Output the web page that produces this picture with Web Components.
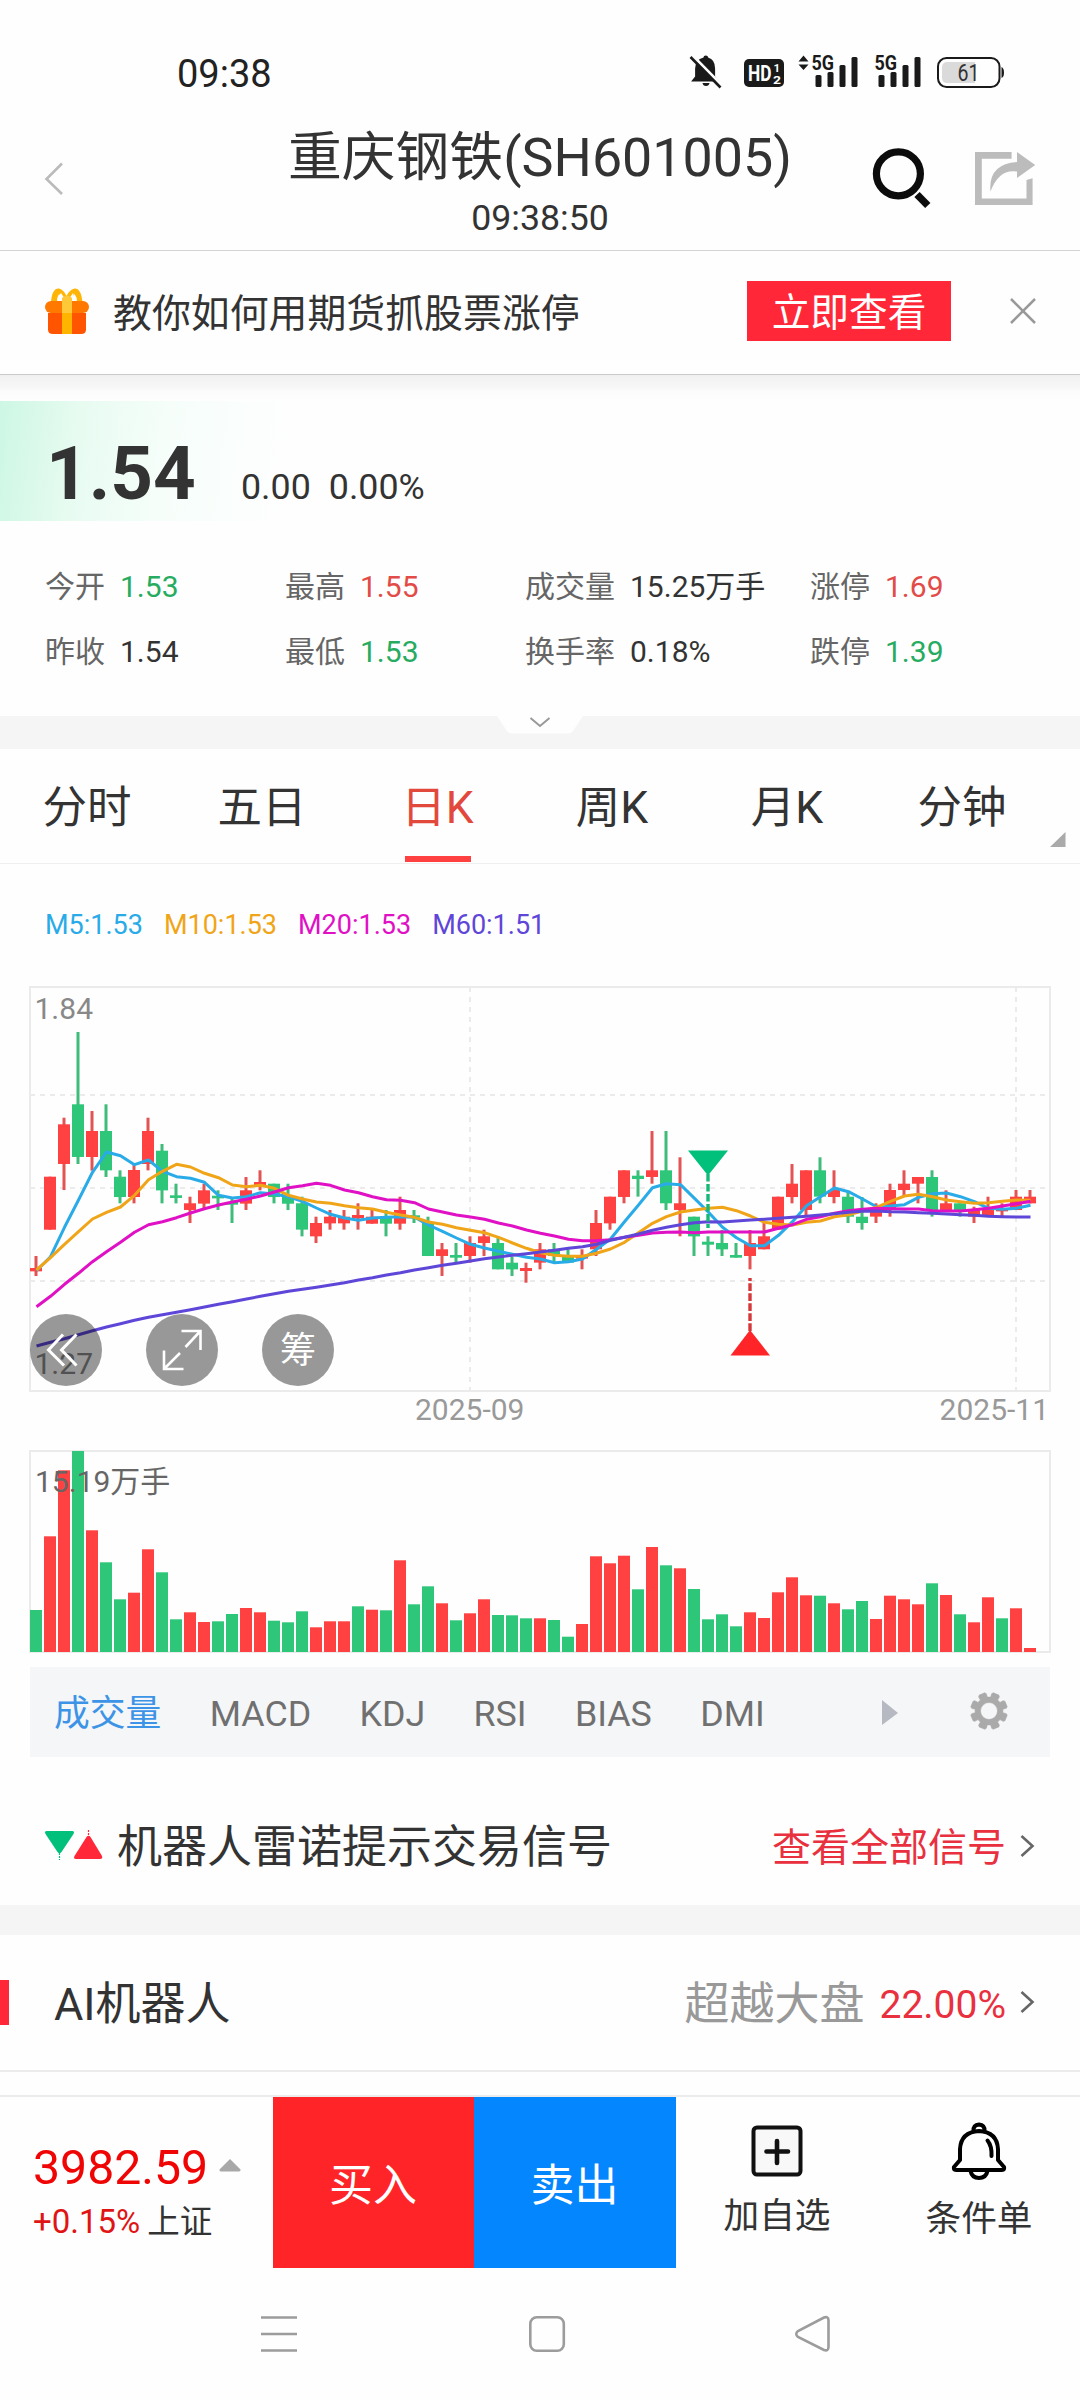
<!DOCTYPE html>
<html lang="zh-CN">
<head>
<meta charset="utf-8">
<title>重庆钢铁(SH601005)</title>
<style>
html,body{margin:0;padding:0;background:#fefefe}
body{width:1080px;height:2400px;overflow:hidden;font-family:Roboto,"Noto Sans CJK SC",sans-serif;color:#333}
</style>
</head>
<body>
<stock-page></stock-page>
<script>
const define=(name,css,html,init)=>{
  const t=document.createElement('template');
  t.innerHTML=`<style>:host{display:block;box-sizing:border-box}*{box-sizing:border-box}svg{display:block}${css}</style>${html}`;
  customElements.define(name,class extends HTMLElement{
    constructor(){super();this.attachShadow({mode:'open'}).appendChild(t.content.cloneNode(true));}
    connectedCallback(){if(init&&!this.ready){this.ready=true;init.call(this,this.shadowRoot);}}
  });
};

/* System status bar */
define('status-bar',`
:host{height:110px;display:flex;justify-content:space-between;padding:52px 74px 0 177px}
.clock{font-size:38px;line-height:44px;color:#222}
svg{margin-top:-2px}
`,`<span class="clock">09:38</span>
<svg width="320" height="44" viewBox="686 50 320 44" fill="#1a1a1a" font-family="Roboto,sans-serif">
<path d="M703.5 57.5q0-2 2.3-2t2.3 2q7 2 7 11v8l4 5h-28l4-5v-8q0-9 8.400-11z"/><path d="M702.500 83h7q-.5 3-3.500 3t-3.500-3z"/>
<path d="M692.500 55.500L723 86.500" stroke="#fefefe" stroke-width="3"/><path d="M690.500 57L720.500 87.500" stroke="#1a1a1a" stroke-width="2.600"/>
<rect x="744" y="59" width="40" height="28" rx="5"/>
<g fill="#fff" font-weight="700"><text x="748" y="81" font-size="22" textLength="23.500" lengthAdjust="spacingAndGlyphs">HD</text><text x="773.500" y="71.500" font-size="11.500">1</text><text x="773" y="84" font-size="11.500" textLength="8" lengthAdjust="spacingAndGlyphs">2</text></g>
<path d="M803.500 55.500l5 6h-10zM803.500 70l5-5.500h-10z"/>
<text x="811.500" y="70" font-size="20" font-weight="700" textLength="22.500" lengthAdjust="spacingAndGlyphs">5G</text>
<rect x="815.500" y="75" width="6" height="12" rx="1.500"/><rect x="827.500" y="72" width="6" height="15" rx="1.500"/><rect x="839.500" y="65" width="6" height="22" rx="1.500"/><rect x="851.500" y="57" width="6" height="30" rx="1.500"/>
<text x="874.500" y="70" font-size="20" font-weight="700" textLength="22.500" lengthAdjust="spacingAndGlyphs">5G</text>
<rect x="878.500" y="75" width="6" height="12" rx="1.500"/><rect x="890.500" y="72" width="6" height="15" rx="1.500"/><rect x="902.500" y="65" width="6" height="22" rx="1.500"/><rect x="914.500" y="57" width="6" height="30" rx="1.500"/>
<rect x="938" y="58" width="61.500" height="29" rx="8.500" fill="none" stroke="#1a1a1a" stroke-width="2"/>
<path d="M947.500 62H975V83H947.500q-5.500 0-5.500-5.500V67.500q0-5.500 5.500-5.500z" fill="#dadada"/><path d="M1001.500 67q2.500 1 2.500 5.500t-2.500 5.500z"/>
<text x="968.500" y="81" font-size="23" text-anchor="middle" fill="#333" textLength="22" lengthAdjust="spacingAndGlyphs">61</text>
</svg>`);

/* Title bar */
define('app-header',`
:host{height:141px;display:grid;grid-template-columns:220px 1fr 220px;border-bottom:1px solid #d4d4d4}
.mid{display:flex;flex-direction:column;align-items:center;padding-top:12px;white-space:nowrap}
h1{margin:0;font-weight:400;font-size:53.800px;line-height:72px}
time{font-size:35.700px;line-height:48px}
.back{padding:51px 0 0 43px}
.tools{padding:36px 0 0 8px}
`,`<div class="back"><svg width="22" height="36" viewBox="0 0 22 36" fill="none" stroke="#bbb" stroke-width="2.600"><path d="M19 2.500L3.500 18 19 33"/></svg></div>
<div class="mid"><h1><slot></slot></h1><time>09:38:50</time></div>
<div class="tools"><svg width="180" height="66" viewBox="868 146 180 66">
<circle cx="898.400" cy="173.800" r="22" fill="none" stroke="#0c0c0c" stroke-width="7.200"/><path d="M917 194.500l10.800 11" stroke="#0c0c0c" stroke-width="7.400"/>
<path d="M1011.600 152H975V205H1032.600V178.300L1026.500 180V198.500H981.800V158.800H1011.600z" fill="#bcbcbc"/>
<path d="M1017 152l18.200 13L1017 178V171.500Q999 168.500 990.500 191.500Q988 164 1017 162z" fill="#bcbcbc"/></svg></div>`);

/* Promotion strip */
define('promo-banner',`
:host{height:124px;display:flex;align-items:center;padding:0 44px 3px 44px;border-bottom:1.500px solid #cacaca}
.msg{font-size:38.900px;line-height:60px;margin-left:23px;flex:1;white-space:nowrap;padding-top:5px}
button{all:unset;box-sizing:border-box;width:204px;height:60px;line-height:64px;background:#ff2738;color:#fff;font-size:38.700px;text-align:center;margin-right:59px;white-space:nowrap}
`,`<svg width="46" height="48" viewBox="0 0 46 48">
<path d="M7 15Q8 1 15 1.500 20 3 22.500 9 25 3 30.500 1.500 37 1 38.500 15H30Q30 8 29 6L23 15 17 6Q14 9 14 15z" fill="#ffb508"/><path d="M13 15Q13 10 15 7l5 8zM33 15Q33 10 30.500 7l-5 8z" fill="#fff"/>
<path d="M4 26H42V42.500Q42 47 37 47H9Q4 47 4 42.500z" fill="#ff5500"/><rect x="1" y="14" width="44" height="12" rx="6" fill="#ff7900"/>
<path d="M18 11q5-5 10 0V26H18z" fill="#ffc838"/><rect x="18" y="26" width="10" height="21" fill="#ffb400"/></svg>
<span class="msg"><slot></slot></span><button>立即查看</button>
<svg width="26" height="26" viewBox="0 0 26 26" stroke="#999" stroke-width="2.500"><path d="M1 1l24 24M25 1L1 25"/></svg>`);

/* Price headline */
define('quote-head',`
:host{height:146px;padding-top:26px;background:linear-gradient(#f1f1f1,#f8f8f8 14px,#fcfcfc 16px,#fefefe 26px)}
.row{height:120px;display:flex;background:linear-gradient(97deg,#cdf7e4 0,#e7fbf1 80px,#f6fefa 170px,#fefefe 300px);padding-left:46px;white-space:nowrap}
b{font-size:74.500px;line-height:90px;padding-top:28px;width:195px}
span{font-size:35.800px;line-height:44px;padding-top:64px;margin-right:18px}
`,`<div class="row"><b>1.54</b><span>0.00</span><span>0.00%</span></div>`);

define('stat-item',`
:host{display:flex;align-items:center;gap:15px;font-size:30px;line-height:64px;white-space:nowrap}
.k{color:#666}
:host([tone=up]) .v{color:#e24b47}:host([tone=down]) .v{color:#27ab60}
`,`<span class="k"><slot name="label"></slot></span><span class="v"><slot></slot></span>`);

define('stat-grid',`
:host{height:195px;display:grid;grid-template-columns:240px 240px 285px 225px;grid-auto-rows:65px;padding:33px 0 0 45px}
`,`<slot></slot>`);

/* Grey gap with the expand handle */
define('section-gap',`
:host{height:30px;background:#f5f5f5;display:flex;justify-content:center}
:host([expand]){height:33px}
svg{display:none}:host([expand]) svg{display:block}
`,`<svg width="86" height="18" viewBox="0 0 86 18"><path d="M0 0H86L76 15q-2 2.500-5 2.500H15q-3 0-5-2.500z" fill="#fefefe"/><path d="M33.500 2l9.500 8 9.500-8" fill="none" stroke="#999" stroke-width="2"/></svg>`);

/* Chart period tabs */
define('period-tabs',`
:host{height:115px;display:flex;border-bottom:1px solid #efefef;font-size:44.500px}
.t{width:175px;display:flex;flex-direction:column;align-items:center;line-height:60px;padding:29px 1px 0 0;white-space:nowrap}
.on{color:#e2483c;padding-right:0}.on::after{content:"";width:66px;height:6px;background:#ff4141;margin-top:18px}
svg{margin:83px 0 0 0}
`,`<span class="t">分时</span><span class="t">五日</span><span class="t on">日K</span><span class="t">周K</span><span class="t">月K</span><span class="t">分钟</span>
<svg width="16" height="16"><path d="M15.500 0V15H0z" fill="#aaa"/></svg>`);

define('ma-legend',`
:host{height:121px;display:flex;gap:21px;padding:41px 0 0 45px;font-size:27px;line-height:40px;white-space:nowrap}
.a{color:#29abe8}.b{color:#f0a519}.c{color:#e010c4}.d{color:#5e46d8}
`,`<span class="a">M5:1.53</span><span class="b">M10:1.53</span><span class="c">M20:1.53</span><span class="d">M60:1.51</span>`);

const RED='#ff4141',GREEN='#2ec679';

/* Candles: side, high, body top, body bottom, low, in thirds of a pixel */
const CANDLES=`R828,864,874,888 R590,590,749,749 R413,433,552,630 G156,373,531,552 R393,453,531,572 G373,453,571,591 G571,590,651,670 R552,570,651,670 R413,453,552,571 G492,512,631,670 G611,646,654,670 R650,670,690,729 R611,631,671,686 G631,647,655,690 G651,666,674,729 R591,631,671,690 R571,606,615,631 G611,611,651,670 G611,650,671,690 G650,670,749,769 R710,729,769,789 R690,710,730,749 R690,710,730,749 R670,705,715,749 R690,710,731,731 G690,710,731,769 R650,690,731,749 G690,706,713,729 G710,729,828,828 R789,808,828,888 G789,825,833,848 R769,789,828,848 R749,769,789,828 G769,789,868,868 G830,848,868,888 R848,864,873,908 R789,808,848,868 G789,808,828,848 G808,828,848,848 R808,826,836,868 R690,729,808,828 R650,650,730,749 R571,571,651,670 G571,587,597,650 R453,571,591,611 G453,571,670,690 R532,670,690,769 G710,710,769,828 G769,785,794,828 G750,789,808,828 G789,825,833,833 R750,789,828,868 R729,769,808,808 R650,650,749,749 R552,611,651,670 R571,571,690,708 G532,571,650,670 R571,630,651,670 G635,650,710,729 G651,710,729,749 R670,685,710,729 R611,630,690,710 R571,611,630,650 R591,591,611,670 G571,591,690,710 R631,670,690,690 G670,670,690,710 R680,690,710,729 R650,685,705,710 R670,686,694,710 R630,650,690,690 R630,650,670,670`.split(' ');
const LINES=[
['#29abe8','872 830 742 660 577 516 527 554 540 574 590 595 607 646 654 650 638 642 650 664 684 703 714 721 714 712 710 712 735 754 774 793 804 814 823 832 837 848 845 837 808 777 725 675 623 611 614 655 697 742 773 797 797 766 725 677 650 624 635 657 680 678 674 652 641 639 650 665 685 688 685 676'],
['#f0a519','870 833 793 755 717 697 681 646 599 574 553 561 580 593 615 620 616 625 646 657 666 670 677 683 687 697 705 712 726 733 743 751 758 772 789 805 818 826 829 829 820 807 787 758 730 710 696 690 685 682 692 708 727 733 735 727 723 710 704 693 682 664 648 643 650 660 665 670 668 664 660 661'],
['#e010c4','980 949 913 880 845 815 787 757 734 725 713 699 686 675 666 658 648 636 623 617 610 616 630 638 650 659 661 668 687 696 705 711 718 729 738 750 760 768 778 782 782 779 772 766 759 757 756 758 756 756 756 756 756 745 734 718 710 700 692 688 685 686 687 687 692 693 693 689 685 678 671 664'],
['#5e46d8','1098 1087 1076 1064 1052 1041 1031 1021 1012 1004 997 989 981 973 965 957 949 941 934 928 922 915 908 900 893 885 878 870 863 856 850 843 836 831 826 821 816 811 805 800 793 781 772 762 751 742 734 728 725 726 723 720 718 715 712 709 705 701 697 694 693 695 696 698 700 702 704 706 709 710 711 711']];

define('kline-chart',`
:host{height:453px;position:relative}
.tools{position:absolute;left:30px;top:329px;display:flex;gap:44px}
`,`<svg class="c" width="1080" height="453" viewBox="0 985 1080 453" font-family="Roboto,sans-serif"></svg>
<div class="tools"><round-tool><svg width="72" height="72" viewBox="0 0 72 72" fill="none" stroke="#fff" stroke-width="3"><path d="M33 20.500L18.500 36 34 51.500M46.500 20.500L31.500 36 46.500 51.500"/></svg></round-tool>
<round-tool><svg width="72" height="72" viewBox="0 0 72 72" fill="none" stroke="#fff" stroke-width="2.600"><path d="M35.500 17H54.500V36M54 17.500L39.500 33M18 36.500V55H37.500M18.500 54.500L34 39"/></svg></round-tool>
<round-tool>筹</round-tool></div>`,function(r){
  const Y=v=>+(980+v/3).toFixed(1);
  let s=`<g stroke="#ebebeb" stroke-width="2" fill="none"><rect x="30" y="987" width="1020" height="404"/>
  <path d="M30 1095H1050M30 1188H1050M30 1281H1050M470 987V1391M1016 987V1391" stroke-dasharray="5 5"/></g>
  <text x="34.500" y="1019" font-size="30" fill="#888">1.84</text><text x="34.500" y="1374" font-size="30" fill="#888">1.27</text>
  <text x="415" y="1420" font-size="30" fill="#999">2025-09</text><text x="1049" y="1420" font-size="30" fill="#999" text-anchor="end">2025-11</text>`;
  CANDLES.forEach((c,i)=>{
    const [h,t,b,l]=c.slice(1).split(',').map(Number),red=c[0]==='R',x=30+14*i;
    s+=`<rect x="${x+4.500}" y="${Y(h)}" width="3" height="${(l-h)/3}" fill="${red?'#e25353':'#3fbb7a'}"/><rect x="${x}" y="${Y(t)}" width="12" height="${(b-t)/3}" fill="${red?RED:GREEN}"/>`;
  });
  LINES.forEach(([c,v])=>{s+=`<polyline fill="none" stroke="${c}" stroke-width="3" stroke-linejoin="round" points="${v.split(' ').map((y,i)=>`${36.500+14*i},${Y(+y)}`).join(' ')}"/>`;});
  s+=`<path d="M688 1150.500H728L708 1175.500z" fill="#00c07c"/><path d="M708 1174V1228" stroke="#17b877" stroke-width="3.400" stroke-dasharray="7.500 2.500"/>
  <path d="M750 1330L770 1355.500H730.500z" fill="#ff2428"/><path d="M750 1331V1278" stroke="#d4383a" stroke-width="3.400" stroke-dasharray="7.800 2.200"/>`;
  r.querySelector('.c').innerHTML=s;
});

define('round-tool',`
:host{width:72px;height:72px;border-radius:50%;background:rgba(0,0,0,.4);color:#fff;font-size:36px;line-height:74px;text-align:center}
`,`<slot></slot>`);

/* Volume bars: side and top edge, in thirds of a pixel */
const VOLUME='G540 R319 R121 G63 R301 G397 G508 R488 R358 G427 G568 R547 R576 G574 G552 R534 R547 G572 G577 G544 R592 R574 R574 G529 R539 G541 R391 G523 G469 R520 G571 R550 R508 G555 G556 G565 R565 G570 G620 R582 R379 R400 R377 G478 R351 G406 R415 G477 G568 G553 G589 R547 R564 R487 R442 R496 G497 R520 G538 G513 R567 R497 R508 R523 G460 R495 G553 R577 R502 G565 R535 R654'.split(' ');
define('volume-chart',`:host{height:229px}`,`<svg width="1080" height="229" viewBox="0 1438 1080 229" font-family='Roboto,"Noto Sans CJK SC",sans-serif'></svg>`,function(r){
  r.querySelector('svg').innerHTML=`<rect x="30" y="1451" width="1020" height="201" fill="none" stroke="#ebebeb" stroke-width="2"/>`+
  VOLUME.map((v,i)=>{const y=1430+v.slice(1)/3;return `<rect x="${30+14*i}" y="${y.toFixed(1)}" width="12" height="${(1652-y).toFixed(1)}" fill="${v[0]==='R'?RED:GREEN}"/>`;}).join('')+
  `<text x="35" y="1492" font-size="30" fill="#666">15.19万手</text>`;
});

define('indicator-bar',`
:host{height:90px;margin:0 30px;background:#f5f6f8;display:flex;align-items:center;font-size:35.800px;line-height:60px;color:#707070;padding:2px 42px 0 24px;gap:48.300px;white-space:nowrap}
span{padding-top:2px}
.on{color:#3d94e6}
.arrow{margin-left:auto}.gear{margin:-4px 0 0 23.700px}
`,`<span class="on">成交量</span><span>MACD</span><span>KDJ</span><span>RSI</span><span>BIAS</span><span>DMI</span>
<svg class="arrow" width="16" height="26"><path d="M0 0L16 13 0 25z" fill="#b6b9c1"/></svg>
<svg class="gear" width="38" height="38" viewBox="-19 -19 38 38"></svg>`,function(r){
  const p=[];
  for(let k=0;k<8;k++){const a=(k*45+22.500)*Math.PI/180;
    [[-.27,14],[-.24,17.500],[-.16,18.700],[.16,18.700],[.24,17.500],[.27,14]].forEach(([d,q])=>p.push((Math.cos(a+d)*q).toFixed(2)+' '+(Math.sin(a+d)*q).toFixed(2)));}
  r.querySelector('.gear').innerHTML=`<path fill-rule="evenodd" fill="#aaa" stroke="#aaa" stroke-width=".6" stroke-linejoin="round" d="M${p.join('L')}ZM8.500 0A8.500 8.500 0 1 0-8.500 0A8.500 8.500 0 1 0 8.500 0Z"/>`;
});

/* Row with a leading mark, a title and a link on the right */
define('link-row',`
:host{display:flex;align-items:center;padding-right:45px;font-size:45px;line-height:60px;white-space:nowrap}
.title{flex:1}
.link{display:flex;align-items:center;font-size:39px;color:#e8303f}
.chev{margin:-5px 0 0 14px}
`,`<slot name="mark"></slot><span class="title"><slot></slot></span><span class="link"><slot name="link"></slot></span>
<svg class="chev" width="15" height="24" viewBox="0 0 15 24" fill="none" stroke="#666" stroke-width="2.600"><path d="M1.500 2L12.500 12 1.500 22"/></svg>`);

define('action-item',`
:host{width:202px;display:flex;flex-direction:column;align-items:center;font-size:35.700px;line-height:48px;white-space:nowrap}
`,`<slot name="icon"></slot><slot></slot>`);

/* Bottom trading bar */
define('trade-bar',`
:host{height:173px;display:flex;border-top:2px solid #ececec;background:#fefefe}
.idx{width:273px;padding:41px 0 0 33px;white-space:nowrap}
.l1{display:flex;align-items:center;font-size:48.200px;line-height:60px;color:#f00505;gap:11px}
.l1 svg{margin-top:-5px}
.l2{display:flex;align-items:center;font-size:33px;line-height:48px;color:#e01414;gap:7px}
.l2 span{color:#333;font-size:32.500px}
.b{width:201px;background:#ff2428;color:#fff;font-size:44px;line-height:178px;text-align:center;padding-right:1px}
.s{width:202px;background:#0486ff}
`,`<div class="idx"><div class="l1">3982.59<svg width="22" height="13" viewBox="0 0 22 13"><path d="M11 0L21.500 10.500Q22 12.500 20 12.500H2Q0 12.500.5 10.500z" fill="#a8a8a8"/></svg></div>
<div class="l2">+0.15%<span>上证</span></div></div>
<div class="b">买入</div><div class="b s">卖出</div>
<action-item><svg slot="icon" style="margin:28px 0 15px" width="52" height="52" viewBox="0 0 52 52"><rect x="2.500" y="2.500" width="47" height="47" rx="3.500" fill="#f8f8f8" stroke="#111" stroke-width="4"/><path d="M26 16V38M15.500 26.500H37" stroke="#111" stroke-width="4.600" stroke-linecap="round"/></svg>加自选</action-item>
<action-item><svg slot="icon" style="margin:25px 0 15px" width="56" height="58" viewBox="0 0 56 58" fill="none" stroke="#000" stroke-width="4" stroke-linejoin="round" stroke-linecap="round"><path d="M9 38V27Q10 10 28 9Q46 10 47 27V38L53 45Q54 48 51 48H5Q2 48 3 45z"/><path d="M22.500 9Q22 3 28 2.500Q34 3 33.500 9M19.500 49Q21 56 28 56T36.500 49"/><path d="M36.500 18.500Q41 24 40.500 34"/></svg>条件单</action-item>`);

/* System navigation keys */
define('nav-bar',`
:host{height:132px;padding:46px 0 0 258px}
`,`<svg width="580" height="44" viewBox="258 2314 580 44" fill="none" stroke="#9c9c9c" stroke-width="2.600"><path d="M261 2317.500H297M261 2334H297M261 2350.500H297"/><rect x="530.300" y="2317.300" width="33.500" height="33.500" rx="6.500"/><path d="M824 2317.500Q828.500 2316 828.500 2320.500V2347Q828.500 2351.500 824 2350L798 2337Q794.500 2334 798 2331z"/></svg>`);

define('stock-page',`
:host{width:1080px;height:2400px;display:flex;flex-direction:column;background:#fefefe}
:host>*{flex:none}
.signal{height:148px;padding:34px 45px 0 45px}
.ai{height:137px;padding-top:4px;border-bottom:2px solid #ececec}
.ai::before{content:"";width:9px;height:45px;background:#ff2738;margin:-4px 45px 0 0}
.beat{font-size:45px;color:#999;margin-right:15px}
.spacer{height:23px}
`,`<status-bar></status-bar><app-header>重庆钢铁(SH601005)</app-header><promo-banner>教你如何用期货抓股票涨停</promo-banner><quote-head></quote-head>
<stat-grid>
<stat-item tone="down"><span slot="label">今开</span>1.53</stat-item><stat-item tone="up"><span slot="label">最高</span>1.55</stat-item><stat-item><span slot="label">成交量</span>15.25万手</stat-item><stat-item tone="up"><span slot="label">涨停</span>1.69</stat-item>
<stat-item><span slot="label">昨收</span>1.54</stat-item><stat-item tone="down"><span slot="label">最低</span>1.53</stat-item><stat-item><span slot="label">换手率</span>0.18%</stat-item><stat-item tone="down"><span slot="label">跌停</span>1.39</stat-item>
</stat-grid>
<section-gap expand></section-gap><period-tabs></period-tabs><ma-legend></ma-legend><kline-chart></kline-chart><volume-chart></volume-chart><indicator-bar></indicator-bar>
<link-row class="signal"><svg slot="mark" style="margin:-7px 14px 0 0" width="58" height="30" viewBox="0 0 58 30"><path d="M2 1H27Q30 1 28.500 4L16.500 22Q14.500 24.500 12.500 22L.5 4Q-1 1 2 1z" fill="#00c07c"/><path d="M14.500 23V30" stroke="#00c07c" stroke-width="1.200" stroke-dasharray="2 1"/><path d="M31 29H55Q58 29 57 26L45.500 7Q43.500 4.500 41.500 7L29.500 26Q28 29 31 29z" fill="#ff2738"/><path d="M43.500 0V7" stroke="#ff2738" stroke-width="1.200" stroke-dasharray="2 1"/></svg>机器人雷诺提示交易信号<span slot="link">查看全部信号</span></link-row>
<section-gap></section-gap>
<link-row class="ai">AI机器人<span slot="link" class="beat">超越大盘</span><span slot="link">22.00%</span></link-row>
<div class="spacer"></div><trade-bar></trade-bar><nav-bar></nav-bar>`);
</script>
</body>
</html>
